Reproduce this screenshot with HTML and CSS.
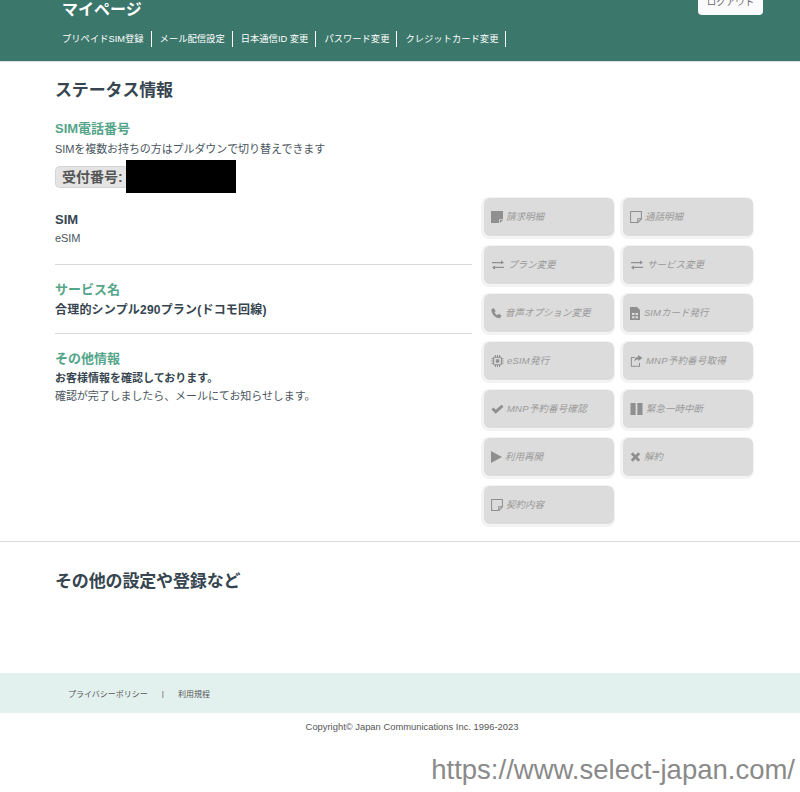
FILE: index.html
```html
<!DOCTYPE html>
<html lang="ja">
<head>
	<meta charset="UTF-8">
	<title>マイページ</title>
	<link rel="stylesheet" href="styles.css">
</head>
<body>
	<header class="site-header">
		<div class="page-title">マイページ</div>
		<a class="logout">ログアウト</a>
		<nav class="sub-nav">
			<a>プリペイドSIM登録</a>
			<a>メール配信設定</a>
			<a>日本通信ID 変更</a>
			<a>パスワード変更</a>
			<a>クレジットカード変更</a>
		</nav>
	</header>

	<main class="status">
		<h2 class="heading">ステータス情報</h2>
		<div class="status-body">
			<div class="info">
				<div class="number-block">
					<h3 class="label">SIM電話番号</h3>
					<p class="text">SIMを複数お持ちの方はプルダウンで切り替えできます</p>
					<div class="number-row">
						<span class="number-select">受付番号:</span>
						<span class="redacted"></span>
					</div>
				</div>
				<div class="sim-block">
					<h4 class="sim-title">SIM</h4>
					<p class="text">eSIM</p>
				</div>
				<div class="service-block">
					<h3 class="label">サービス名</h3>
					<p class="strong">合理的シンプル290プラン(ドコモ回線)</p>
				</div>
				<div class="other-block">
					<h3 class="label">その他情報</h3>
					<p class="notice">お客様情報を確認しております。</p>
					<p class="text">確認が完了しましたら、メールにてお知らせします。</p>
				</div>
			</div>

			<div class="actions">
				<a class="action">
					<svg class="icon" viewBox="0 0 14 14"><path d="M0 0h14v9.500H9.500V14H0z"/><path d="M10.500 10.500H14L10.500 14z"/></svg>
					<span>請求明細</span>
				</a>
				<a class="action">
					<svg class="icon" viewBox="0 0 14 14"><path class="line" d="M.7.7h12.600v8.600l-4 4H.7z"/><path class="line" d="M9 13V9h4"/></svg>
					<span>通話明細</span>
				</a>
				<a class="action">
					<svg class="icon icon-14" viewBox="0 0 14 14"><path d="M0 3.500h10.500V1.500L14 4.500l-3.500 1.500V5H0z"/><path d="M14 9H3.500V7.500L0 10l3.500 2.500v-2H14z"/></svg>
					<span>プラン変更</span>
				</a>
				<a class="action">
					<svg class="icon icon-14" viewBox="0 0 14 14"><path d="M0 3.500h10.500V1.500L14 4.500l-3.500 1.500V5H0z"/><path d="M14 9H3.500V7.500L0 10l3.500 2.500v-2H14z"/></svg>
					<span>サービス変更</span>
				</a>
				<a class="action">
					<svg class="icon icon-11" viewBox="0 0 14 14"><path d="M.5 2.500 3.500.5l2.500 4-1.500 1.500c.6 1.500 2 3 3.900 3.700L10 8l3.500 2.500-2 3C6 14 0 8 .5 2.500z"/></svg>
					<span>音声オプション変更</span>
				</a>
				<a class="action">
					<svg class="icon icon-sim" viewBox="0 0 10 13"><path fill-rule="evenodd" d="M0 0h7l3 3v10H0zM2 6v2h2.500V6zm3.500 0v2H8V6zM2 9.200v2h2.500v-2zm3.500 0v2H8v-2z"/></svg>
					<span>SIMカード発行</span>
				</a>
				<a class="action">
					<svg class="icon icon-13" viewBox="0 0 14 14"><rect class="line" x="2.500" y="2.500" width="9" height="9" rx="1"/><rect x="5" y="5" width="4" height="4"/><path class="line" d="M4.500 0v2.500M7 0v2.500M9.500 0v2.500M4.500 11.500V14M7 11.500V14M9.500 11.500V14M0 4.500h2.500M0 7h2.500M0 9.500h2.500M11.500 4.500H14M11.500 7H14M11.500 9.500H14"/></svg>
					<span class="wide">eSIM発行</span>
				</a>
				<a class="action">
					<svg class="icon icon-13" viewBox="0 0 14 14"><path class="line" d="M5 3H1v10h9.500V9"/><path d="M9 0 14 3.500 9 7V5C7 5 5.500 6 4.500 8 4.500 4.500 6 2.300 9 2z"/></svg>
					<span class="wide">MNP予約番号取得</span>
				</a>
				<a class="action">
					<svg class="icon icon-13" viewBox="0 0 14 14"><path d="M0 7.500 2.200 5.200 5 8 11.800 2 14 4.300 5 12.500z"/></svg>
					<span class="wide">MNP予約番号確認</span>
				</a>
				<a class="action">
					<svg class="icon icon-13" viewBox="0 0 14 14"><path d="M0 0h6v14H0zM8 0h6v14H8z"/></svg>
					<span>緊急一時中断</span>
				</a>
				<a class="action">
					<svg class="icon icon-11" viewBox="0 0 11 12" preserveAspectRatio="none"><path d="M0 0l11 6-11 6z"/></svg>
					<span>利用再開</span>
				</a>
				<a class="action">
					<svg class="icon icon-11" viewBox="0 0 14 14"><path d="M3.500 1 7 4.500 10.500 1 13 3.500 9.500 7 13 10.500 10.500 13 7 9.500 3.500 13 1 10.500 4.500 7 1 3.500z"/></svg>
					<span>解約</span>
				</a>
				<a class="action">
					<svg class="icon" viewBox="0 0 14 14"><path class="line" d="M.7.7h12.600v8.600l-4 4H.7z"/><path class="line" d="M9 13V9h4"/></svg>
					<span>契約内容</span>
				</a>
			</div>
		</div>
	</main>

	<section class="more">
		<h2 class="heading">その他の設定や登録など</h2>
	</section>

	<footer>
		<div class="footer-links">
			<a>プライバシーポリシー</a>
			<span>|</span>
			<a>利用規程</a>
		</div>
		<p class="copyright">Copyright© Japan Communications Inc. 1996-2023</p>
		<p class="watermark">https://www.select-japan.com/</p>
	</footer>
</body>
</html>
```

FILE: styles.css
```css
* {
	box-sizing: border-box;
}
body {
	margin: 0;
	background-color: #fff;
	color: #36454f;
	font-family: "Liberation Sans", "Noto Sans CJK JP", sans-serif;
	overflow: hidden;
}
h2, h3, h4, p {
	margin: 0;
}
.site-header {
	position: relative;
	height: 62px;
	padding: 0 62px;
	background-color: #3b776b;
	border-bottom: 1px solid #d9dfdd;
	color: #fff;
}
.page-title {
	height: 31px;
	font-size: 16px;
	font-weight: bold;
	line-height: 20px;
}
.logout {
	position: absolute;
	top: -12px;
	left: 698px;
	width: 65px;
	height: 27px;
	background-color: #fbfbfd;
	border-radius: 4px;
	color: #666;
	font-size: 9.500px;
	line-height: 27px;
	text-align: center;
}
.sub-nav {
	display: flex;
}
.sub-nav a {
	height: 16px;
	padding-right: 7px;
	margin-right: 8px;
	border-right: 1px solid #fff;
	font-size: 9.300px;
	line-height: 16px;
}
.status {
	padding: 17px 47px 0 55px;
	height: 480px;
	border-bottom: 1px solid #d8dcdb;
}
.heading {
	font-size: 17px;
	line-height: 24px;
	letter-spacing: -0.150px;
}
.status-body {
	display: flex;
	justify-content: space-between;
}
.info {
	width: 417px;
}
.number-block {
	margin-top: 16px;
}
.number-block .text {
	margin-top: 1px;
}
.label {
	color: #55a58a;
	font-size: 13px;
	line-height: 20px;
}
.text {
	font-size: 11px;
	line-height: 18px;
	letter-spacing: -0.080px;
	color: #4a5660;
}
.number-row {
	display: flex;
	align-items: center;
	margin-top: 2px;
}
.number-select {
	width: 71px;
	height: 22px;
	padding-left: 6px;
	background-color: #e4e4e4;
	border: 1px solid #d4d4d4;
	border-right: 0;
	border-radius: 5px 0 0 5px;
	color: #555;
	font-size: 14px;
	font-weight: bold;
	line-height: 20px;
	white-space: nowrap;
}
.redacted {
	width: 110px;
	height: 33px;
	background-color: #000;
}
.sim-block {
	margin-top: 17px;
	padding-bottom: 17px;
	border-bottom: 1px solid #d8d8d8;
}
.sim-title {
	font-size: 13px;
	line-height: 19px;
}
.service-block {
	margin-top: 15px;
	padding-bottom: 13px;
	border-bottom: 1px solid #d8d8d8;
}
.strong {
	font-size: 12px;
	font-weight: bold;
	line-height: 20px;
	letter-spacing: 0.200px;
}
.other-block {
	margin-top: 15px;
}
.notice {
	font-size: 11px;
	font-weight: bold;
	line-height: 18px;
}
.actions {
	display: grid;
	grid-template-columns: repeat(2, 130px);
	grid-auto-rows: 38px;
	column-gap: 9px;
	row-gap: 10px;
	margin-top: 95px;
	width: 269px;
}
.action {
	display: flex;
	align-items: center;
	gap: 3px;
	padding: 0 7px;
	background-color: #dcdcdc;
	border-radius: 6px;
	box-shadow: -1px 1px 0 2px #f3f3f3;
	color: #999;
	font-size: 9.500px;
	font-style: italic;
}
.action span {
	margin-top: -2px;
}
.action .wide {
	letter-spacing: 0.200px;
}
.icon {
	flex: none;
	width: 12px;
	height: 12px;
	fill: #8f8f8f;
}
.icon-sim {
	width: 10px;
	height: 13px;
	margin-right: 1px;
}
.icon-11 {
	width: 11px;
}
.icon-13 {
	width: 13px;
}
.icon-14 {
	width: 14px;
}
.icon .line {
	fill: none;
	stroke: #8f8f8f;
	stroke-width: 1.200;
}
.more {
	height: 131px;
	padding: 28px 55px 0;
}
.footer-links {
	display: flex;
	gap: 14px;
	height: 40px;
	padding-left: 68px;
	align-items: center;
	background-color: #e2f0ee;
	color: #555;
	font-size: 8px;
}
.copyright {
	margin-top: 8px;
	text-align: center;
	font-size: 9.400px;
	line-height: 12px;
	color: #555;
	padding-left: 24px;
}
.watermark {
	margin-top: 21px;
	padding-right: 5px;
	text-align: right;
	color: #8a8a8a;
	font-size: 27.500px;
	line-height: 32px;
}
```
